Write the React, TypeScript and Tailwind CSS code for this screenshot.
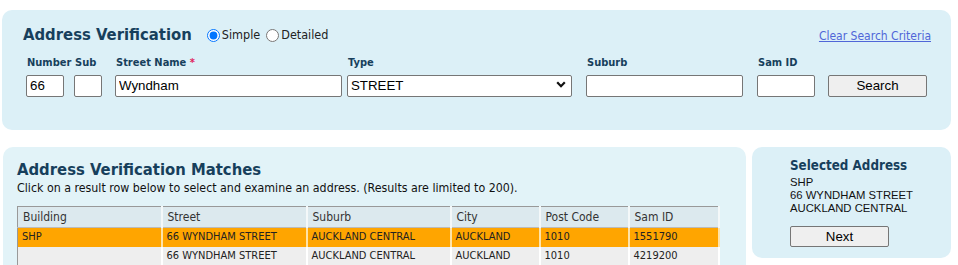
import React from 'react';

const rows = [
  ['SHP', '66 WYNDHAM STREET', 'AUCKLAND CENTRAL', 'AUCKLAND', '1010', '1551790'],
  ['', '66 WYNDHAM STREET', 'AUCKLAND CENTRAL', 'AUCKLAND', '1010', '4219200'],
];

const cols = [
  ['Building', 'w-[144px]'],
  ['Street', 'w-[145px]'],
  ['Suburb', 'w-[144px]'],
  ['City', 'w-[89px]'],
  ['Post Code', 'w-[89px]'],
  ['Sam ID', 'w-[90px]'],
];

const inputCls =
  "h-[22px] border border-[#767676] rounded-[2px] bg-white px-[3px] text-[13.3px] text-black font-['Liberation_Sans',Arial,sans-serif] outline-none";

const Label = ({ children }: { children: React.ReactNode }) => (
  <div className="h-[17px] text-[11px] font-bold text-[#173f5c] leading-[13px] pl-[1px]">{children}</div>
);

export default function App() {
  return (
    <div className="w-[958px] h-[265px] overflow-hidden bg-white font-['DejaVu_Sans_Condensed','DejaVu_Sans',Verdana,sans-serif]">
      {/* Search panel */}
      <div className="pt-[10px] pl-[2px] pr-[7px]">
        <div className="h-[120px] rounded-[10px] bg-[#dcf0f7] pt-[15px]">
          <div className="flex items-center justify-between pl-[21px] pr-[20px]">
            <div className="flex items-center">
              <h1 className="text-[16.5px] font-bold text-[#173f5c] leading-[20px]">Address Verification</h1>
              <label className="ml-[15px] flex items-center text-[12.5px] text-[#222] mt-[1px]">
                <input type="radio" name="mode" defaultChecked className="m-0 mr-[2px] w-[13px] h-[13px] accent-[#0075ff]" />
                Simple
              </label>
              <label className="ml-[6px] flex items-center text-[12.5px] text-[#222] mt-[1px]">
                <input type="radio" name="mode" className="m-0 mr-[2px] w-[13px] h-[13px]" />
                Detailed
              </label>
            </div>
            <a href="#" className="text-[12px] text-[#5066d8] underline mt-[1px]">Clear Search Criteria</a>
          </div>

          <div className="flex items-end pl-[24px] mt-[11px]">
            <div className="w-[38px]">
              <Label>Number</Label>
              <input className={`${inputCls} w-[38px]`} defaultValue="66" />
            </div>
            <div className="w-[28px] ml-[10px]">
              <Label>Sub</Label>
              <input className={`${inputCls} w-[28px]`} />
            </div>
            <div className="w-[227px] ml-[13px]">
              <Label>
                Street Name <span className="text-[#e0245e]">*</span>
              </Label>
              <input className={`${inputCls} w-[227px]`} defaultValue="Wyndham" />
            </div>
            <div className="w-[225px] ml-[5px]">
              <Label>Type</Label>
              <div className="relative">
                <select className={`${inputCls} w-[225px] appearance-none`} defaultValue="STREET">
                  <option>STREET</option>
                </select>
                <svg viewBox="0 0 10 7" className="absolute right-[6px] top-[8px] w-[10px] h-[7px]" fill="none">
                  <path d="M1.2 1.2 L5 5.2 L8.8 1.2" stroke="#111" strokeWidth="2.2" />
                </svg>
              </div>
            </div>
            <div className="w-[157px] ml-[14px]">
              <Label>Suburb</Label>
              <input className={`${inputCls} w-[157px]`} />
            </div>
            <div className="w-[58px] ml-[14px]">
              <Label>Sam ID</Label>
              <input className={`${inputCls} w-[58px]`} />
            </div>
            <button className="ml-[13px] w-[99px] h-[22px] border border-[#767676] rounded-[2px] bg-[#efefef] text-[13.3px] text-black font-['Liberation_Sans',Arial,sans-serif]">
              Search
            </button>
          </div>
        </div>
      </div>

      {/* Results */}
      <div className="flex mt-[17px] pl-[3px]">
        <div className="w-[743px] h-[130px] rounded-[10px] bg-[#e2f3f8] pt-[13px] pl-[14px]">
          <h2 className="text-[16.5px] font-bold text-[#173f5c] leading-[20px]">Address Verification Matches</h2>
          <p className="text-[12.3px] text-[#111] leading-[16px]">
            Click on a result row below to select and examine an address. (Results are limited to 200).
          </p>
          <table className="mt-[10px] w-[701px] border border-[#999] border-collapse text-left table-fixed">
            <thead>
              <tr className="bg-[#dce9ee] h-[21px]">
                {cols.map(([c, w]) => (
                  <th key={c} className={`${w} font-normal text-[12px] text-[#333] pl-[5px] py-0 border-r-2 border-r-[#f4f8f9] border-b border-b-[#bbb]`}>
                    {c}
                  </th>
                ))}
              </tr>
            </thead>
            <tbody>
              {rows.map((r, i) => (
                <tr key={i} className={`h-[19px] ${i === 0 ? 'bg-[#ffa500]' : 'bg-[#eeeeee]'}`}>
                  {r.map((v, j) => (
                    <td key={j} className={`text-[11px] text-[#222] pl-[4px] py-0 border-r-2 ${i === 0 ? 'border-r-[#ffe3a8]' : 'border-r-white'}`}>
                      {v}
                    </td>
                  ))}
                </tr>
              ))}
            </tbody>
          </table>
        </div>

        <div className="ml-[6px] w-[199px] h-[111px] rounded-[10px] bg-[#dcf0f7] pt-[10px] pl-[38px]">
          <h3 className="text-[13.3px] font-bold text-[#173f5c] leading-[17px]">Selected Address</h3>
          <div className="mt-[2px] text-[11.3px] leading-[13px] text-[#111] font-['Liberation_Sans',Arial,sans-serif]">
            <div>SHP</div>
            <div>66 WYNDHAM STREET</div>
            <div>AUCKLAND CENTRAL</div>
          </div>
          <button className="mt-[11px] w-[99px] h-[21px] border border-[#767676] rounded-[2px] bg-[#efefef] text-[13.3px] text-black font-['Liberation_Sans',Arial,sans-serif]">
            Next
          </button>
        </div>
      </div>
    </div>
  );
}
